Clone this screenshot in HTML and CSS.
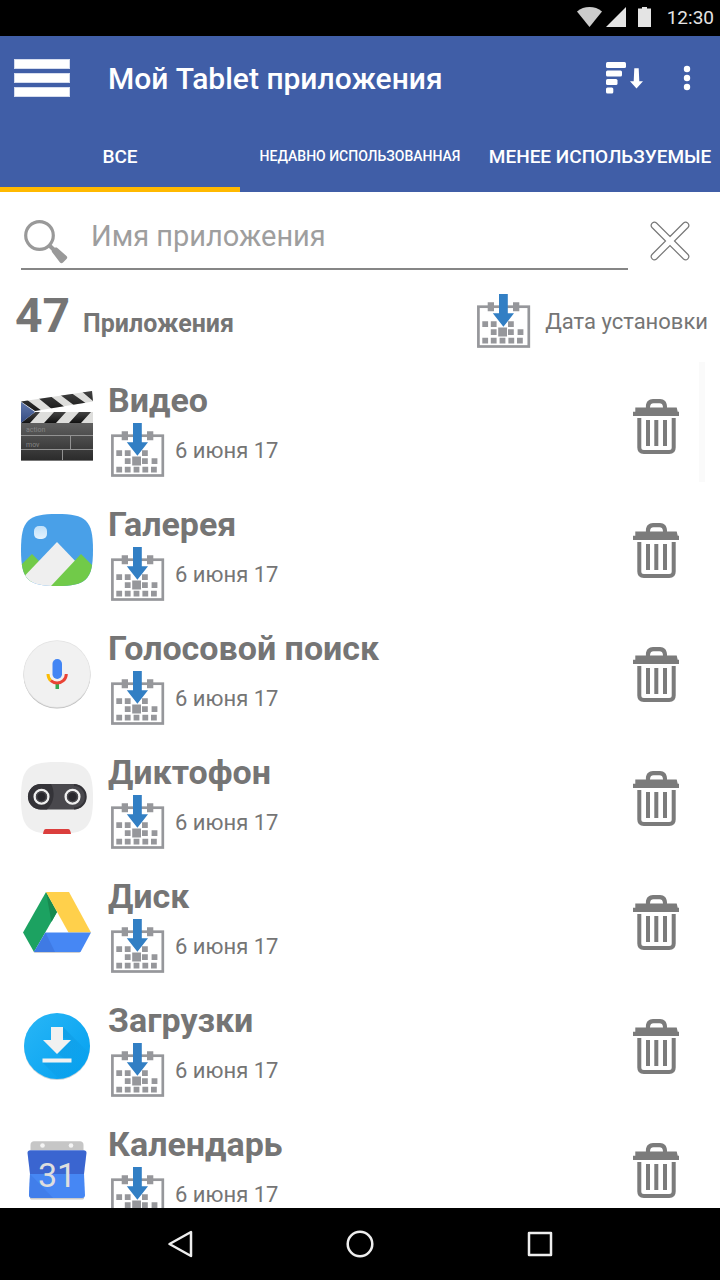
FILE: index.html
```html
<!DOCTYPE html>
<html lang="ru">
<head>
    <meta charset="utf-8">
    <meta name="viewport" content="width=device-width, initial-scale=1">
    <title>Мой Tablet приложения</title>
    <link rel="stylesheet" href="styles.css">
</head>
<body>
    <svg class="sprite" aria-hidden="true">
        <symbol id="calendar" viewBox="0 0 54 54">
            <rect x="1.4" y="12.7" width="50.4" height="39.8" fill="#fff" stroke="#96979b" stroke-width="2.7"/>
            <path fill="#96979b" d="M10.7 8.3h6.3v9h-6.3zM36 8.3h6.3v9H36z
                M5.3 27.2h5.8v5.8H5.3zM13.8 27.2h5.8v5.8h-5.8zM31 27.2h5.8v5.8H31z
                M13.8 35.3h5.8v5.8h-5.8zM31 35.3h5.8v5.8H31zM40.6 35.3h5.8v5.8h-5.8z
                M21.2 33.4h8.8v9h-8.8z
                M5.3 43.8h5.8v5.8H5.3zM13.8 43.8h5.8v5.8h-5.8zM22.6 43.8h5.8v5.8h-5.8zM31.4 43.8h5.8v5.8h-5.8zM40 43.8h5.8v5.8H40z"/>
            <path fill="#327fc4" d="M22 0h8.8v19.3H37L26.4 32.8 15.8 19.3H22z"/>
        </symbol>
        <symbol id="trash" viewBox="0 0 46 55">
            <path fill="#7b7b7b" d="M2.3 8.5h10.600V7.400C12.900 3 15.800 0 20 0h7c4.200 0 7 3 7 7.400v1.100h9.700l1 4.200H46V17H0v-4.300h2.300zM17 8.500h13c0-2.800-1.300-4.300-3.500-4.300h-6C18.300 4.200 17 5.700 17 8.500z"/>
            <path fill="none" stroke="#7b7b7b" stroke-width="4" d="M6.300 19v29.500c0 2.800 1.700 4.500 4.500 4.500h25.400c2.800 0 4.500-1.700 4.500-4.500V19M15 21v26M23.300 21v26M32 21v26"/>
        </symbol>
    </svg>

    <div class="status-bar">
        <svg class="wifi" viewBox="0 0 25 20"><path fill="#ccc" d="M0 4.500C7-1.400 18-1.400 25 4.500L12.500 20z"/></svg>
        <svg class="signal" viewBox="0 0 20 20"><path fill="#e4e4e4" d="M0 20L20 0v20z"/></svg>
        <svg class="battery" viewBox="0 0 13 20"><path fill="#e4e4e4" d="M4 0h5v1.500h4V20H0V1.500h4z"/></svg>
        <span>12:30</span>
    </div>

    <header>
        <div class="app-bar">
            <button class="menu" aria-label="Меню"><span></span><span></span><span></span></button>
            <h1>Мой Tablet приложения</h1>
            <button class="sort" aria-label="Сортировка">
                <svg viewBox="0 0 37 32" fill="#fff">
                    <rect width="20" height="6" rx="1.500"/>
                    <rect y="8.500" width="16" height="6" rx="1.500"/>
                    <rect y="17" width="11.500" height="6" rx="1.500"/>
                    <rect y="25.400" width="7.300" height="6" rx="1.500"/>
                    <path d="M28.300 6.300h4.400l.6 13H37L30.500 26.500 24 19.300h3.700z"/>
                </svg>
            </button>
            <button class="more" aria-label="Ещё">
                <svg viewBox="0 0 8 26" fill="#fff"><circle cx="4" cy="4" r="3.200"/><circle cx="4" cy="13" r="3.200"/><circle cx="4" cy="22" r="3.200"/></svg>
            </button>
        </div>
        <nav class="tabs">
            <button class="active">ВСЕ</button>
            <button class="small">НЕДАВНО ИСПОЛЬЗОВАННАЯ</button>
            <button>МЕНЕЕ ИСПОЛЬЗУЕМЫЕ</button>
        </nav>
    </header>

    <form class="search">
        <div class="search-field">
            <label for="app-name" aria-label="Поиск">
                <svg viewBox="0 0 44 44">
                    <circle cx="15.500" cy="15.500" r="13.800" fill="none" stroke="#999" stroke-width="3.200"/>
                    <path stroke="#999" stroke-width="4" d="M25 25l5 5"/>
                    <path fill="#999" d="M28 32c-1-2 1.500-4.500 3.500-4.500 1 0 1.500 0 2.500.9l8.500 7.600c1 1 1 2 0 3l-3.500 3.500c-1 1-2 1-3 0z"/>
                </svg>
            </label>
            <input type="text" id="app-name" placeholder="Имя приложения">
        </div>
        <button type="reset" class="clear" aria-label="Очистить">
            <svg viewBox="0 0 40 40">
                <path fill="#fff" stroke="#777" stroke-width="1.200" d="M20 15.500L33.500 2c3-2.500 7 1.500 4.500 4.500L24.500 20 38 33.500c2.500 3-1.500 7-4.500 4.500L20 24.500 6.500 38C3.500 40.500-.5 36.500 2 33.500L15.500 20 2 6.500C-.5 3.500 3.500-.5 6.500 2z"/>
            </svg>
        </button>
    </form>

    <div class="summary">
        <span class="count">47</span>
        <span class="count-label">Приложения</span>
        <button class="sort-by">
            <svg class="calendar"><use href="#calendar"/></svg>
            Дата установки
        </button>
    </div>

    <main>
        <ul class="apps">
            <li>
                <svg class="app-icon" viewBox="0 0 72 72">
                    <defs>
                        <linearGradient id="slate" x2="0" y2="1"><stop stop-color="#606060"/><stop offset="1" stop-color="#2b2b2b"/></linearGradient>
                        <linearGradient id="stick" x2="0" y2="1"><stop stop-color="#444"/><stop offset="1" stop-color="#111"/></linearGradient>
                        <linearGradient id="hinge" x2="0" y2="1"><stop stop-color="#6279ad"/><stop offset="1" stop-color="#334a80"/></linearGradient>
                        <clipPath id="top-stick"><path d="M0 11.500L71 1l1 10.500-58 9.500z"/></clipPath>
                        <clipPath id="low-stick"><path d="M14 22h58v11H0z"/></clipPath>
                    </defs>
                    <g clip-path="url(#top-stick)">
                        <path fill="#dededc" d="M0 0h72v24H0z"/>
                        <path fill="url(#stick)" d="M-7 11l12-2 16 12-12 3zM16 7l12-2 17 13-13 2zM38 4l11-2 17 12-12 2zM59 0h13v11z"/>
                    </g>
                    <g clip-path="url(#low-stick)">
                        <path fill="#dededc" d="M0 22h72v11H0z"/>
                        <path fill="url(#stick)" d="M14 22h5L9 33H-3zM33 22h12L35 33H23zM58 22h12L60 33H48zM83 22L73 33h-1V22z"/>
                    </g>
                    <path fill="url(#hinge)" d="M0 12l14 10L0 33z"/>
                    <path fill="url(#slate)" d="M0 33h72v37.500H0z"/>
                    <path fill="none" stroke="#929292" d="M0 45.500h72M0 59.500h72M49.500 46v13M41.500 60v10"/>
                    <path stroke="#777" d="M0 70.500h72"/>
                    <g class="slate-text"><text x="5" y="42">action</text><text x="5" y="57">mov</text></g>
                </svg>
                <div class="info">
                    <h2>Видео</h2>
                    <p><svg class="calendar"><use href="#calendar"/></svg>6 июня 17</p>
                </div>
                <button class="delete" aria-label="Удалить Видео"><svg><use href="#trash"/></svg></button>
            </li>
            <li>
                <svg class="app-icon" viewBox="0 0 72 72">
                    <defs>
                        <clipPath id="squircle"><path d="M36 0c29 0 36 6 36 36s-7 36-36 36S0 66 0 36 7 0 36 0z"/></clipPath>
                        <linearGradient id="moon" x2="0" y2="1"><stop stop-color="#c0e0f9"/><stop offset="1" stop-color="#e3f2fd"/></linearGradient>
                    </defs>
                    <g clip-path="url(#squircle)">
                        <path fill="#49a0e8" d="M0 0h72v72H0z"/>
                        <path fill="#71ca49" d="M0 51l11-11 14 14-14 14H0z"/>
                        <path fill="#efefef" d="M-3 69l39-41 24 25-20 19H-3z"/>
                        <path fill="#71ca49" d="M30 72l30-32 14 14v18z"/>
                    </g>
                    <rect x="13" y="12" width="13" height="13" rx="5" fill="url(#moon)"/>
                </svg>
                <div class="info">
                    <h2>Галерея</h2>
                    <p><svg class="calendar"><use href="#calendar"/></svg>6 июня 17</p>
                </div>
                <button class="delete" aria-label="Удалить Галерея"><svg><use href="#trash"/></svg></button>
            </li>
            <li>
                <svg class="app-icon" viewBox="0 0 72 72">
                    <circle cx="36" cy="37" r="33.500" fill="#bdbdbd"/>
                    <circle cx="36" cy="36" r="33.700" fill="#e2e2e2"/>
                    <circle cx="36" cy="36" r="33" fill="#f1f1f1"/>
                    <path fill="#34a853" d="M34.500 45h3.500v6h-3.500z"/>
                    <g fill="none" stroke-width="3">
                        <path stroke="#fbbc05" d="M27 36c0 2.700 1 5 2.800 6.600"/>
                        <path stroke="#ea4335" d="M29.800 42.600c3.800 3.200 9 3.100 12.500 0C44.200 41 45.300 38.800 45.300 36"/>
                    </g>
                    <rect x="31.500" y="21" width="9.500" height="20" rx="4.700" fill="#4285f4"/>
                </svg>
                <div class="info">
                    <h2>Голосовой поиск</h2>
                    <p><svg class="calendar"><use href="#calendar"/></svg>6 июня 17</p>
                </div>
                <button class="delete" aria-label="Удалить Голосовой поиск"><svg><use href="#trash"/></svg></button>
            </li>
            <li>
                <svg class="app-icon" viewBox="0 0 72 72">
                    <path fill="#efefef" d="M36 0c29 0 36 6 36 36s-7 36-36 36S0 66 0 36 7 0 36 0z"/>
                    <rect x="7" y="22" width="58" height="25.500" rx="12.700" fill="#49484d"/>
                    <path fill="#343338" d="M19.700 22H30c4 7 4 18-4 25.500h-6.300a12.700 12.700 0 0 1 0-25.500z"/>
                    <path fill="none" stroke="#343338" stroke-width="2" d="M53 23a11.700 11.700 0 0 1 0 23.500"/>
                    <g fill="#29282d" stroke="#efefef" stroke-width="2.500"><circle cx="20.500" cy="34.700" r="6.800"/><circle cx="51.500" cy="34.700" r="6.800"/></g>
                    <g fill="none" stroke="#49484d" stroke-width="1.500"><circle cx="20.500" cy="34.700" r="5"/><circle cx="51.500" cy="34.700" r="5"/></g>
                    <path fill="#db3e3d" d="M22 72c.5-3 1-5 3-5h22c2 0 2.500 2 3 5z"/>
                </svg>
                <div class="info">
                    <h2>Диктофон</h2>
                    <p><svg class="calendar"><use href="#calendar"/></svg>6 июня 17</p>
                </div>
                <button class="delete" aria-label="Удалить Диктофон"><svg><use href="#trash"/></svg></button>
            </li>
            <li>
                <svg class="app-icon" viewBox="0 0 72 72">
                    <path fill="#cfcfcf" d="M12.500 65.500h47l-1 1.500h-45z"/>
                    <path fill="#1ca261" d="M25 6L2 46.500 13 66l23-40z"/>
                    <path fill="#188a50" d="M25 6l11 20-5.500 10z"/>
                    <path fill="#ffd04b" d="M25 6h23l22 40.500H47.500z"/>
                    <path fill="#4687f4" d="M24.500 46.500H70L59.500 66H13z"/>
                    <path fill="#3f7ae4" d="M24.500 46.500L34 66H13z"/>
                </svg>
                <div class="info">
                    <h2>Диск</h2>
                    <p><svg class="calendar"><use href="#calendar"/></svg>6 июня 17</p>
                </div>
                <button class="delete" aria-label="Удалить Диск"><svg><use href="#trash"/></svg></button>
            </li>
            <li>
                <svg class="app-icon" viewBox="0 0 72 72">
                    <defs>
                        <linearGradient id="disc" x2="1" y2="1"><stop stop-color="#29b6f6"/><stop offset="1" stop-color="#03a0f0"/></linearGradient>
                        <linearGradient id="disc-shade" x2="1" y2="1"><stop stop-color="#0b8fd6"/><stop offset="1" stop-color="#0b97e2" stop-opacity="0"/></linearGradient>
                    </defs>
                    <circle cx="36" cy="37" r="33" fill="#c4d3da"/>
                    <circle cx="36" cy="36" r="33" fill="url(#disc)"/>
                    <path fill="url(#disc-shade)" opacity=".6" d="M42 17l25 25c-4 15-15 26-29 27L22 53h28l-13-9 13-14-8-2z"/>
                    <path fill="#f1f1f1" d="M30 17h12v13h8L36 44 22 30h8zM21.500 48.500h29v4h-29z"/>
                </svg>
                <div class="info">
                    <h2>Загрузки</h2>
                    <p><svg class="calendar"><use href="#calendar"/></svg>6 июня 17</p>
                </div>
                <button class="delete" aria-label="Удалить Загрузки"><svg><use href="#trash"/></svg></button>
            </li>
            <li>
                <svg class="app-icon" viewBox="0 3 72 72">
                    <path fill="#c6c6c6" d="M9.500 19v-5c0-2.500 1.500-3.700 3.500-3.700h46c2 0 3.500 1.200 3.500 3.700v5z"/>
                    <g fill="#f4f4f4"><circle cx="21.500" cy="14.500" r="2.300"/><circle cx="50" cy="14.500" r="2.300"/></g>
                    <path fill="#c8c8c8" d="M9 66h54v1c0 1-1 1.500-2 1.500H11c-1 0-2-.5-2-1.500z"/>
                    <path fill="#3a65d0" d="M6.500 22c0-2 1-2.800 3-2.800h53c2 0 3 .8 3 2.800L63 43H9z"/>
                    <path fill="#4687f4" d="M9 43h54l1 21c0 2-1 3-3 3H11c-2 0-3-1-3-3z"/>
                    <path fill="#3d78e3" d="M9 43l23 24H11c-2 0-3-1-3-3z" opacity=".6"/>
                    <text class="day" x="36" y="56">31</text>
                </svg>
                <div class="info">
                    <h2>Календарь</h2>
                    <p><svg class="calendar"><use href="#calendar"/></svg>6 июня 17</p>
                </div>
                <button class="delete" aria-label="Удалить Календарь"><svg><use href="#trash"/></svg></button>
            </li>
        </ul>
        <div class="scrollbar"></div>
    </main>

    <footer class="nav-bar">
        <button aria-label="Назад"><svg viewBox="0 0 30 30"><path d="M26 3v24L4.500 15z"/></svg></button>
        <button aria-label="Домой"><svg viewBox="0 0 30 30"><circle cx="15" cy="15" r="12.300"/></svg></button>
        <button aria-label="Недавние"><svg viewBox="0 0 30 30"><path d="M4 4h22v22H4z"/></svg></button>
    </footer>
</body>
</html>
```

FILE: styles.css
```css
* {
    box-sizing: border-box;
}

body {
    margin: 0;
    height: 100vh;
    display: flex;
    flex-direction: column;
    overflow: hidden;
    background: #fff;
    color: #757575;
    font-family: Roboto, sans-serif;
}

h1, h2, p, ul {
    margin: 0;
    padding: 0;
}

button {
    padding: 0;
    border: none;
    background: none;
    color: inherit;
    font-family: inherit;
    cursor: pointer;
}

svg {
    display: block;
    flex: none;
}

.sprite {
    position: absolute;
    width: 0;
    height: 0;
}

.status-bar {
    height: 36px;
    padding: 0 6px 2px;
    display: flex;
    justify-content: flex-end;
    align-items: center;
    background: #000;
    color: #e4e4e4;
    font-size: 19px;
    line-height: 34px;
}

.status-bar span {
    padding-top: 2px;
}

.wifi {
    width: 25px;
    height: 20px;
    margin-right: 4px;
}

.signal {
    width: 20px;
    height: 20px;
    margin-right: 12px;
}

.battery {
    width: 13px;
    height: 20px;
    margin-right: 16px;
}

header {
    background: #405ea7;
    color: #fff;
}

.app-bar {
    height: 84px;
    padding: 0 29px 0 14px;
    display: flex;
    align-items: center;
}

.menu {
    width: 56px;
    display: grid;
    gap: 4px;
    margin-right: 38px;
}

.menu span {
    height: 10px;
    background: #fff;
    border: 1px solid #d5dcee;
}

h1 {
    flex: 1;
    font-size: 30px;
    font-weight: 500;
}

.sort {
    margin-right: 40px;
}

.sort svg {
    width: 37px;
    height: 32px;
}

.more svg {
    width: 8px;
    height: 26px;
}

.tabs {
    height: 72px;
    display: grid;
    grid-template-columns: repeat(3, 1fr);
}

.tabs button {
    padding-top: 5px;
    border-bottom: 5px solid transparent;
    font-size: 19px;
    font-weight: 500;
    white-space: nowrap;
}

.tabs .active {
    border-bottom-color: #ffb900;
}

.tabs .small {
    font-size: 14px;
}

.search {
    padding: 18px 30px 0 21px;
    display: flex;
    align-items: center;
    gap: 22px;
}

.search-field {
    flex: 1;
    height: 60px;
    padding-left: 3px;
    display: flex;
    align-items: center;
    gap: 23px;
    border-bottom: 2px solid #868686;
}

.search-field svg {
    width: 44px;
    height: 44px;
}

.search-field label {
    padding-top: 5px;
}

.search-field input {
    flex: 1;
    min-width: 0;
    padding: 0 0 6px;
    border: none;
    outline: none;
    background: none;
    color: #757575;
    font: 29px Roboto, sans-serif;
}

.search-field input::placeholder {
    color: #9e9e9e;
}

.clear {
    padding-top: 2px;
}

.clear svg {
    width: 40px;
    height: 40px;
}

.summary {
    height: 92px;
    padding: 0 12px 14px 15px;
    display: flex;
    align-items: baseline;
    gap: 13px;
    font-weight: 700;
}

.count {
    font-size: 48px;
    line-height: 92px;
}

.count-label {
    font-size: 25px;
}

.sort-by {
    margin-left: auto;
    display: flex;
    align-self: flex-end;
    align-items: center;
    gap: 14px;
    font-size: 22px;
}

.calendar {
    width: 54px;
    height: 54px;
}

main {
    flex: 1;
    min-height: 0;
    position: relative;
    overflow: hidden;
}

.apps {
    list-style: none;
}

.apps li {
    height: 124px;
    padding: 4px 41px 0 21px;
    display: flex;
    align-items: center;
}

.app-icon {
    width: 72px;
    height: 72px;
    margin-right: 15px;
}

.info {
    flex: 1;
    padding-top: 5px;
}

.info h2 {
    font-size: 34px;
    line-height: 40px;
    font-weight: 700;
}

.info p {
    display: flex;
    align-items: center;
    gap: 10px;
    padding: 3px 0 0 3px;
    font-size: 22px;
}

.delete svg {
    width: 46px;
    height: 55px;
}

.slate-text {
    fill: #858585;
    font-size: 7px;
}

.day {
    fill: #dedede;
    font-size: 34px;
    font-weight: 400;
    text-anchor: middle;
}

.scrollbar {
    position: absolute;
    top: 0;
    right: 15px;
    width: 6px;
    height: 120px;
    background: #fafafa;
}

.nav-bar {
    height: 72px;
    padding: 0 12.5%;
    display: grid;
    grid-template-columns: repeat(3, 1fr);
    background: #000;
}

.nav-bar button {
    display: flex;
    align-items: center;
    justify-content: center;
}

.nav-bar svg {
    width: 30px;
    height: 30px;
    fill: none;
    stroke: #eee;
    stroke-width: 2.5;
    stroke-linejoin: round;
}
```
